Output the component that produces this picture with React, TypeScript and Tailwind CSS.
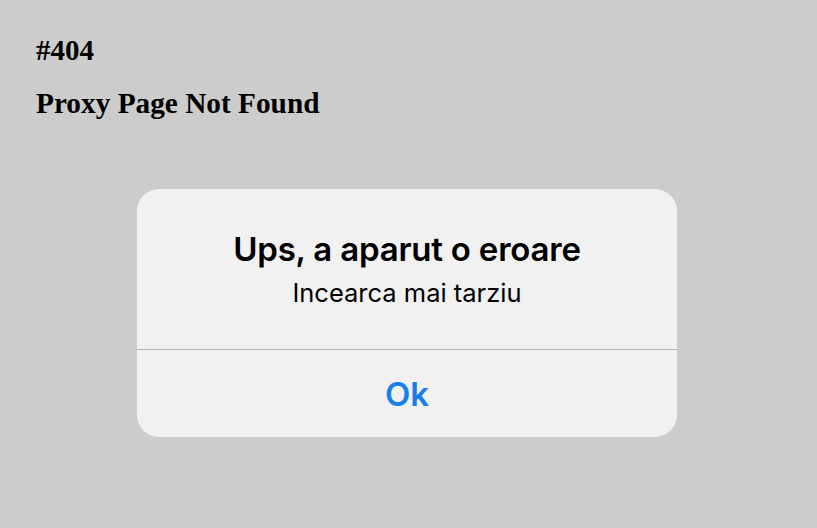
import React from 'react';

const App: React.FC = () => {
  return (
    <div className="min-h-[528px] w-full bg-[#cccccc] flex flex-col">
      <div className="pl-[36px] pt-[30px] font-['Liberation_Serif',serif] font-bold text-black">
        <h1 className="text-[29px] leading-[40px]">#404</h1>
        <h2 className="text-[29.3px] leading-[40px] mt-[13px]">Proxy Page Not Found</h2>
      </div>

      <div className="flex justify-center mt-[66px] pr-[3px]">
        <div className="w-[540px] h-[248px] bg-[#f1f1f1] rounded-[22px] flex flex-col overflow-hidden font-['Inter',sans-serif]">
          <div className="h-[160px] flex flex-col items-center pt-[40px]">
            <p className="text-[33px] leading-[40px] font-semibold text-black tracking-[-0.2px]">Ups, a aparut o eroare</p>
            <p className="text-[25.5px] leading-[30px] text-black mt-[9px]">Incearca mai tarziu</p>
          </div>
          <div className="h-px bg-[#b4b4b4]" />
          <button className="flex-1 flex items-center justify-center text-[33px] font-semibold text-[#1a7ee8] pt-[3px]">
            Ok
          </button>
        </div>
      </div>
    </div>
  );
};

export default App;
